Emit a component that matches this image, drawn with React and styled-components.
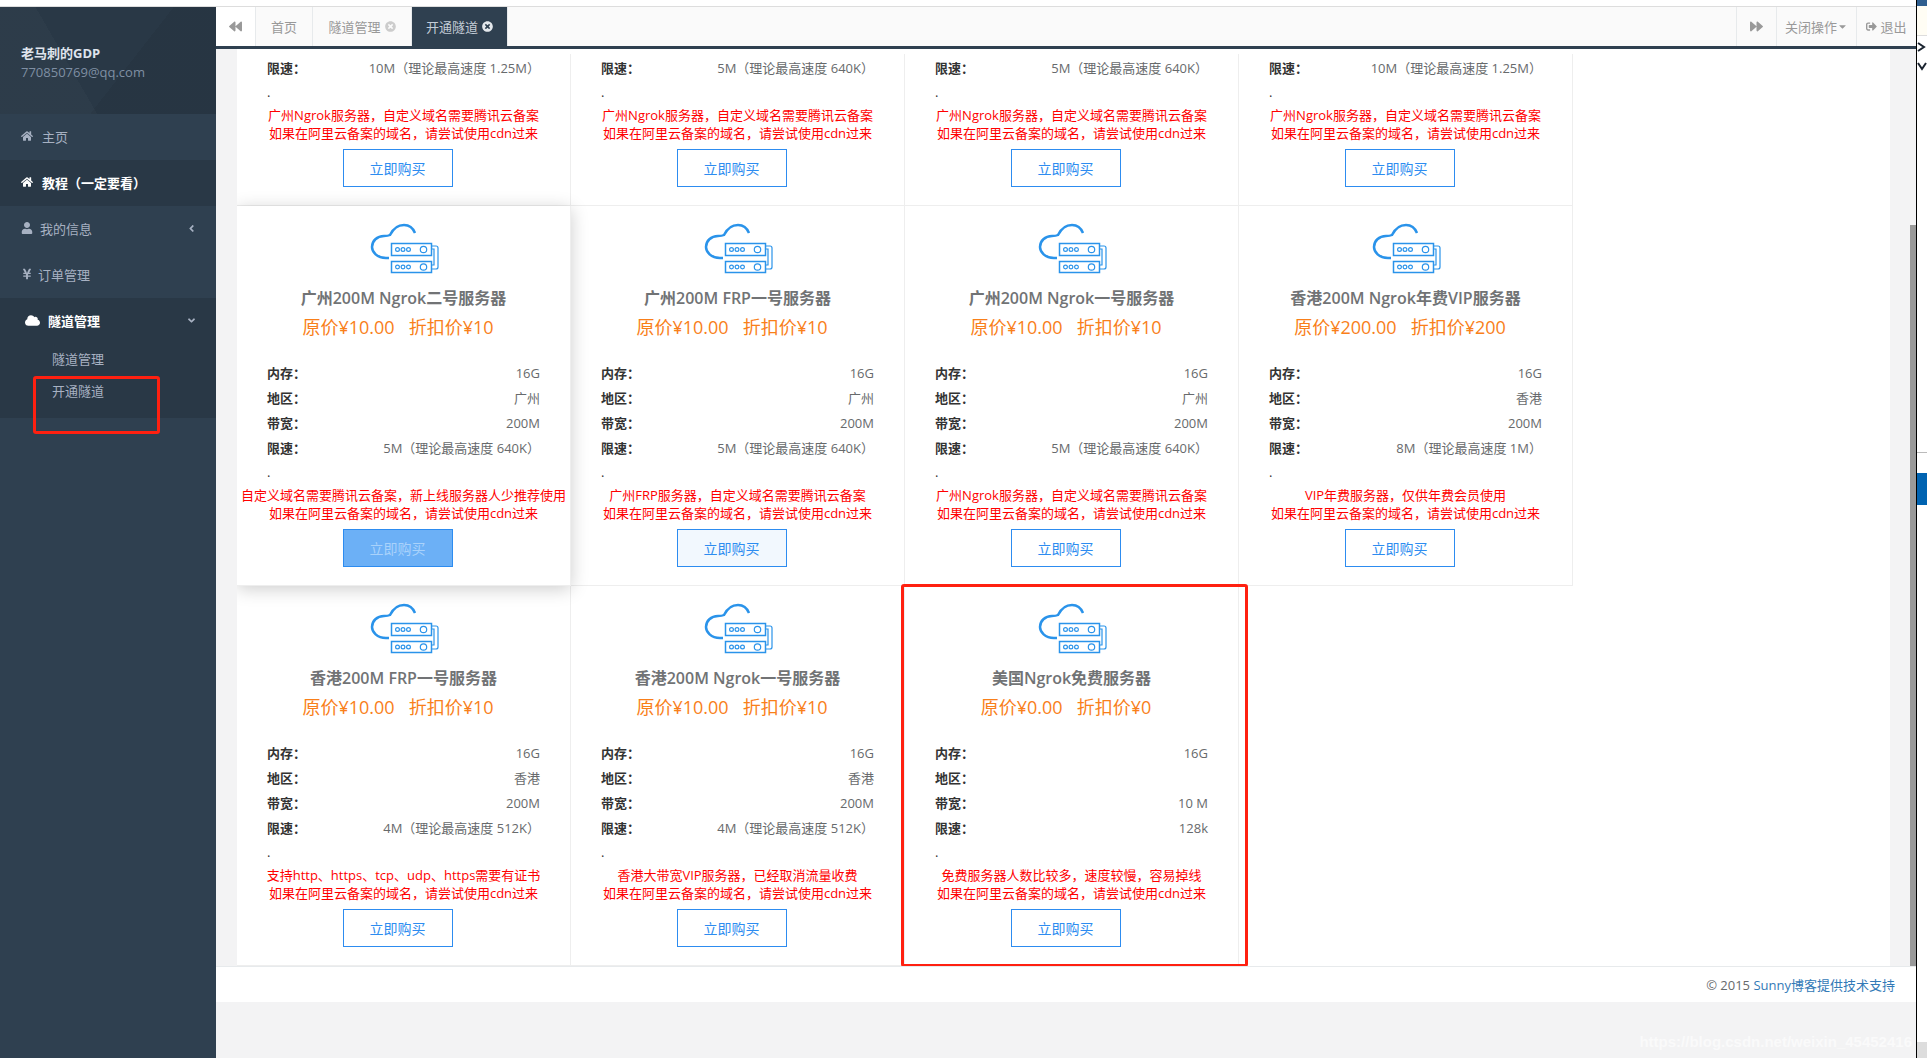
import React from 'react';
import styled, { createGlobalStyle, css } from 'styled-components';
import {
  FaAngleDown,
  FaAngleLeft,
  FaBackward,
  FaCaretDown,
  FaCloud,
  FaForward,
  FaHome,
  FaSignOutAlt,
  FaTimesCircle,
  FaUser,
  FaYenSign,
} from 'react-icons/fa';

const FONT = '"Open Sans", "Noto Sans CJK SC", sans-serif';
const NOTE_A = '广州Ngrok服务器，自定义域名需要腾讯云备案';
const NOTE_B = '如果在阿里云备案的域名，请尝试使用cdn过来';
const SPEED_5 = '5M（理论最高速度 640K）';
const SPEED_10 = '10M（理论最高速度 1.25M）';

const PLANS = [
  { title: '广州10M Ngrok服务器', price: '10.00', sale: '10', area: '广州', band: '10M', speed: SPEED_10, note: NOTE_A },
  { title: '广州5M Ngrok服务器', price: '10.00', sale: '10', area: '广州', band: '5M', speed: SPEED_5, note: NOTE_A },
  { title: '广州5M Ngrok服务器', price: '10.00', sale: '10', area: '广州', band: '5M', speed: SPEED_5, note: NOTE_A },
  { title: '广州10M Ngrok服务器', price: '10.00', sale: '10', area: '广州', band: '10M', speed: SPEED_10, note: NOTE_A },
  { title: '广州200M Ngrok二号服务器', price: '10.00', sale: '10', area: '广州', band: '200M', speed: SPEED_5, note: '自定义域名需要腾讯云备案，新上线服务器人少推荐使用', lifted: true, button: 'filled' },
  { title: '广州200M FRP一号服务器', price: '10.00', sale: '10', area: '广州', band: '200M', speed: SPEED_5, note: '广州FRP服务器，自定义域名需要腾讯云备案', button: 'tint' },
  { title: '广州200M Ngrok一号服务器', price: '10.00', sale: '10', area: '广州', band: '200M', speed: SPEED_5, note: NOTE_A },
  { title: '香港200M Ngrok年费VIP服务器', price: '200.00', sale: '200', area: '香港', band: '200M', speed: '8M（理论最高速度 1M）', note: 'VIP年费服务器，仅供年费会员使用' },
  { title: '香港200M FRP一号服务器', price: '10.00', sale: '10', area: '香港', band: '200M', speed: '4M（理论最高速度 512K）', note: '支持http、https、tcp、udp、https需要有证书' },
  { title: '香港200M Ngrok一号服务器', price: '10.00', sale: '10', area: '香港', band: '200M', speed: '4M（理论最高速度 512K）', note: '香港大带宽VIP服务器，已经取消流量收费' },
  { title: '美国Ngrok免费服务器', price: '0.00', sale: '0', area: '', band: '10 M', speed: '128k', note: '免费服务器人数比较多，速度较慢，容易掉线', marked: true },
];

const GlobalStyle = createGlobalStyle`
  html, body {
    margin: 0;
    padding: 0;
    background: #fff;
    overflow: hidden;
  }
  body {
    font-family: ${FONT};
    font-size: 13px;
    color: #676a6c;
  }
  * {
    box-sizing: border-box;
  }
`;

const Page = styled.div`
  display: flex;
  width: 1927px;
  height: 1058px;
  overflow: hidden;
  position: relative;
`;

const Frame = styled.div`
  width: 1916px;
  display: flex;
  flex-direction: column;
`;

const TopStrip = styled.div`
  height: 7px;
  flex: none;
  background: #fff;
  border-bottom: 1px solid #ddd;
`;

const Body = styled.div`
  flex: 1;
  display: flex;
  min-height: 0;
`;

const Sidebar = styled.nav`
  width: 216px;
  flex: none;
  background: #2f4050;
  position: relative;
`;

const Profile = styled.div`
  height: 107px;
  padding: 36px 21px 0;
  background:
    linear-gradient(128deg, transparent 58%, rgba(0, 0, 0, 0.05) 58%),
    linear-gradient(60deg, rgba(255, 255, 255, 0.02) 35%, transparent 35%),
    #293846;
`;

const ProfileName = styled.div`
  color: #dfe4ed;
  font-weight: 700;
  font-size: 13px;
  line-height: 20px;
`;

const ProfileMail = styled.div`
  color: #7f8fa3;
  font-size: 13px;
  line-height: 18px;
`;

const NavItem = styled.div`
  height: 46px;
  display: flex;
  align-items: center;
  padding: 0 19px 2px ${(p) => (p.$open ? 25 : 21)}px;
  gap: ${(p) => p.$gap}px;
  color: ${(p) => (p.$active ? '#fff' : '#a7b1c2')};
  font-weight: ${(p) => (p.$active ? 700 : 400)};
  background: ${(p) => (p.$active ? '#293846' : '#2f4050')};
`;

const NavIcon = styled.span`
  display: flex;
  flex: none;
  font-size: ${(p) => p.$size || 12}px;
`;

const NavCaret = styled.span`
  display: flex;
  flex: none;
  font-size: 11px;
  color: #a7b1c2;
`;

const NavLabel = styled.span`
  flex: 1;
`;

const SubNav = styled.div`
  height: 74px;
  background: #293846;
`;

const SubItem = styled.div`
  height: 32px;
  line-height: 30px;
  padding-left: 52px;
  color: #a7b1c2;
`;

const SideMark = styled.div`
  position: absolute;
  left: 33px;
  top: 369px;
  width: 127px;
  height: 58px;
  border: 3px solid #ff2010;
  border-radius: 3px;
`;

const Main = styled.main`
  flex: 1;
  min-width: 0;
  display: flex;
  flex-direction: column;
  background: #f3f3f4;
`;

const TabBar = styled.header`
  height: 42px;
  flex: none;
  display: flex;
  background: #fafafa;
  border-bottom: 3px solid #2f4050;
`;

const ArrowButton = styled.div`
  width: 40px;
  flex: none;
  display: flex;
  align-items: center;
  justify-content: center;
  color: #999;
  background: ${(p) => (p.$white ? '#fff' : '#fafafa')};
  border-right: ${(p) => (p.$white ? '1px solid #e7eaec' : 0)};
  border-left: ${(p) => (p.$white ? 0 : '1px solid #e7eaec')};
  font-size: 13px;
`;

const Tab = styled.div`
  display: flex;
  align-items: center;
  justify-content: center;
  gap: 4px;
  width: ${(p) => p.$width}px;
  border-right: 1px solid #e7eaec;
  color: ${(p) => (p.$active ? '#c3ccd6' : '#999')};
  background: ${(p) => (p.$active ? '#2f4050' : 'transparent')};
  svg {
    font-size: 11px;
    color: ${(p) => (p.$active ? '#e4e8ec' : '#ccc')};
  }
`;

const TabSpacer = styled.div`
  flex: 1;
`;

const ToolButton = styled.div`
  width: ${(p) => p.$width}px;
  flex: none;
  display: flex;
  align-items: center;
  justify-content: center;
  gap: ${(p) => p.$gap}px;
  color: #999;
  border-left: 1px solid #e7eaec;
  font-size: 13px;
  svg {
    font-size: 11px;
  }
`;

const ScrollArea = styled.div`
  height: 917px;
  flex: none;
  padding: 0 26px 0 21px;
  position: relative;
  overflow: hidden;
`;

const ScrollThumb = styled.div`
  position: absolute;
  right: 0;
  top: 176px;
  bottom: 0;
  width: 6px;
  background: #999;
`;

const Panel = styled.section`
  height: 100%;
  background: #fff;
  border-top: 5px solid #fff;
  overflow: hidden;
`;

const CardGrid = styled.div`
  display: grid;
  grid-template-columns: repeat(4, 334px);
  grid-auto-rows: 380px;
  margin-top: -228px;
`;

const Card = styled.article`
  position: relative;
  display: flex;
  flex-direction: column;
  align-items: center;
  padding-top: 16px;
  background: #fff;
  border-right: 1px solid #eee;
  border-bottom: 1px solid #eee;
  ${(p) =>
    p.$lifted &&
    css`
      z-index: 1;
      box-shadow: 0 3px 17px rgba(0, 0, 0, 0.2);
    `}
  ${(p) =>
    p.$marked &&
    css`
      &::after {
        content: '';
        position: absolute;
        left: -4px;
        top: -2px;
        right: -10px;
        bottom: -2px;
        border: 3px solid #ff2010;
        border-radius: 3px;
      }
    `}
`;

const ServerIcon = styled.svg`
  width: 70px;
  height: 52px;
  flex: none;
  fill: none;
  stroke: #2a93ea;
`;

const Title = styled.h3`
  margin: 12px 0 0;
  font-size: 16px;
  line-height: 24px;
  font-weight: 600;
  color: #717375;
  white-space: nowrap;
`;

const Price = styled.div`
  margin: 4px 11px 0 0;
  font-size: 18px;
  line-height: 26px;
  color: #f97f1a;
  white-space: pre;
`;

const Specs = styled.dl`
  margin: 20px 0 0;
  padding: 0 30px;
  width: 100%;
`;

const SpecRow = styled.div`
  height: 25px;
  display: flex;
  align-items: center;
  justify-content: space-between;
`;

const SpecLabel = styled.dt`
  color: #333;
  font-weight: 700;
`;

const SpecValue = styled.dd`
  margin: 0;
  color: #676a6c;
`;

const Dot = styled.div`
  width: 100%;
  margin-top: 3px;
  padding-left: 30px;
  line-height: 18px;
  color: #333;
`;

const Note = styled.p`
  margin: 5px 0 0;
  line-height: 18px;
  color: #f00;
  text-align: center;
  white-space: nowrap;
`;

const BUY_STYLES = {
  filled: css`
    background: #6cb0f6;
    color: #a9d2fb;
  `,
  tint: css`
    background: #f2f8fe;
    color: #2d8cf0;
  `,
  plain: css`
    background: #fff;
    color: #2d8cf0;
  `,
};

const BuyButton = styled.button`
  width: 110px;
  height: 38px;
  margin: 7px 12px 0 0;
  padding: 0;
  border: 1px solid #2d8cf0;
  border-radius: 0;
  font-family: ${FONT};
  font-size: 14px;
  ${(p) => BUY_STYLES[p.$look]}
`;

const Footer = styled.footer`
  height: 36px;
  flex: none;
  display: flex;
  align-items: center;
  justify-content: flex-end;
  padding-right: 21px;
  background: #fff;
  border-top: 1px solid #e7eaec;
  color: #676a6c;
`;

const FooterLink = styled.span`
  color: #337ab7;
`;

const Watermark = styled.div`
  position: absolute;
  right: 15px;
  bottom: 8px;
  white-space: nowrap;
  font-family: "Liberation Sans", sans-serif;
  font-size: 15px;
  font-weight: 700;
  color: rgba(255, 255, 255, 0.6);
`;

const WindowEdge = styled.div`
  width: 1px;
  flex: none;
  background: #000;
`;

const NextWindow = styled.aside`
  flex: 1;
  display: flex;
  flex-direction: column;
  background: #fff;
`;

const WindowBlock = styled.div`
  height: ${(p) => p.$height}px;
  flex: none;
  background: ${(p) => p.$color};
`;

const WindowArrows = styled.div`
  height: 418px;
  flex: none;
  display: flex;
  flex-direction: column;
  gap: 7px;
  padding-top: 5px;
  border-top: 1px solid #ddd;
  border-bottom: 1px solid #bbb;
  svg {
    width: 10px;
    height: 12px;
    flex: none;
    fill: none;
    stroke: #1b2430;
    stroke-width: 2;
  }
`;

const CloudServer = () => (
  <ServerIcon viewBox="0 0 70 52">
    <path strokeWidth="2.5" d="M20 36H17C8 36 3 30 3 25C3 19 8 14 15 14C17 14 19 14 21 13C24 7 29 3 35 3C40 3 44 6 46 11" />
    <rect x="22.5" y="21.5" width="40" height="12" strokeWidth="1.5" />
    <rect x="22.5" y="39.5" width="40" height="11" strokeWidth="1.5" />
    <path strokeWidth="1.2" d="M63 24H67Q69 24 69 26V45Q69 47 67 47H63M63 27H65V43H63" />
    {[27.5, 45].map((cy) => (
      <g key={cy} strokeWidth="1.2">
        <circle cx="28.5" cy={cy} r="1.9" />
        <circle cx="34" cy={cy} r="1.9" />
        <circle cx="39.5" cy={cy} r="1.9" />
        <circle cx="54.5" cy={cy} r="3.2" />
      </g>
    ))}
  </ServerIcon>
);

const PlanCard = ({ plan }) => (
  <Card $lifted={plan.lifted} $marked={plan.marked}>
    <CloudServer />
    <Title>{plan.title}</Title>
    <Price>{`原价¥${plan.price}   折扣价¥${plan.sale}`}</Price>
    <Specs>
      <SpecRow>
        <SpecLabel>内存：</SpecLabel>
        <SpecValue>16G</SpecValue>
      </SpecRow>
      <SpecRow>
        <SpecLabel>地区：</SpecLabel>
        <SpecValue>{plan.area}</SpecValue>
      </SpecRow>
      <SpecRow>
        <SpecLabel>带宽：</SpecLabel>
        <SpecValue>{plan.band}</SpecValue>
      </SpecRow>
      <SpecRow>
        <SpecLabel>限速：</SpecLabel>
        <SpecValue>{plan.speed}</SpecValue>
      </SpecRow>
    </Specs>
    <Dot>.</Dot>
    <Note>
      {plan.note}
      <br />
      {NOTE_B}
    </Note>
    <BuyButton $look={plan.button || 'plain'}>立即购买</BuyButton>
  </Card>
);

const App = () => (
  <Page>
    <GlobalStyle />
    <Frame>
      <TopStrip />
      <Body>
        <Sidebar>
          <Profile>
            <ProfileName>老马刺的GDP</ProfileName>
            <ProfileMail>770850769@qq.com</ProfileMail>
          </Profile>
          <NavItem $gap={9}>
            <NavIcon><FaHome /></NavIcon>
            <NavLabel>主页</NavLabel>
          </NavItem>
          <NavItem $active $gap={9}>
            <NavIcon><FaHome /></NavIcon>
            <NavLabel>教程（一定要看）</NavLabel>
          </NavItem>
          <NavItem $gap={7}>
            <NavIcon><FaUser /></NavIcon>
            <NavLabel>我的信息</NavLabel>
            <NavCaret><FaAngleLeft /></NavCaret>
          </NavItem>
          <NavItem $gap={5}>
            <NavIcon><FaYenSign /></NavIcon>
            <NavLabel>订单管理</NavLabel>
          </NavItem>
          <NavItem $active $open $gap={8}>
            <NavIcon $size={15}><FaCloud /></NavIcon>
            <NavLabel>隧道管理</NavLabel>
            <NavCaret><FaAngleDown /></NavCaret>
          </NavItem>
          <SubNav>
            <SubItem>隧道管理</SubItem>
            <SubItem>开通隧道</SubItem>
          </SubNav>
          <SideMark />
        </Sidebar>
        <Main>
          <TabBar>
            <ArrowButton $white>
              <FaBackward />
            </ArrowButton>
            <Tab $width={57}>首页</Tab>
            <Tab $width={99}>
              隧道管理
              <FaTimesCircle />
            </Tab>
            <Tab $width={96} $active>
              开通隧道
              <FaTimesCircle />
            </Tab>
            <TabSpacer />
            <ArrowButton>
              <FaForward />
            </ArrowButton>
            <ToolButton $width={80} $gap={0}>
              关闭操作
              <FaCaretDown />
            </ToolButton>
            <ToolButton $width={60} $gap={3}>
              <FaSignOutAlt />
              退出
            </ToolButton>
          </TabBar>
          <ScrollArea>
            <Panel>
              <CardGrid>
                {PLANS.map((plan, i) => (
                  <PlanCard key={i} plan={plan} />
                ))}
              </CardGrid>
            </Panel>
            <ScrollThumb />
          </ScrollArea>
          <Footer>
            © 2015&nbsp;<FooterLink>Sunny博客提供技术支持</FooterLink>
          </Footer>
        </Main>
      </Body>
    </Frame>
    <WindowEdge />
    <NextWindow>
      <WindowBlock $height={6} $color="#2f5f8f" />
      <WindowBlock $height={29} $color="#fffdf4" />
      <WindowArrows>
        <svg viewBox="0 0 10 12">
          <path d="M1 2L7 6L1 10" />
        </svg>
        <svg viewBox="0 0 10 12">
          <path d="M1 3L5 9L9 3" />
        </svg>
      </WindowArrows>
      <WindowBlock $height={20} $color="#fff" />
      <WindowBlock $height={32} $color="#0063b1" />
      <WindowBlock $height={537} $color="#fff" />
      <WindowBlock $height={16} $color="#ddd" />
    </NextWindow>
    <Watermark>https://blog.csdn.net/weixin_45452416</Watermark>
  </Page>
);

export default App;
